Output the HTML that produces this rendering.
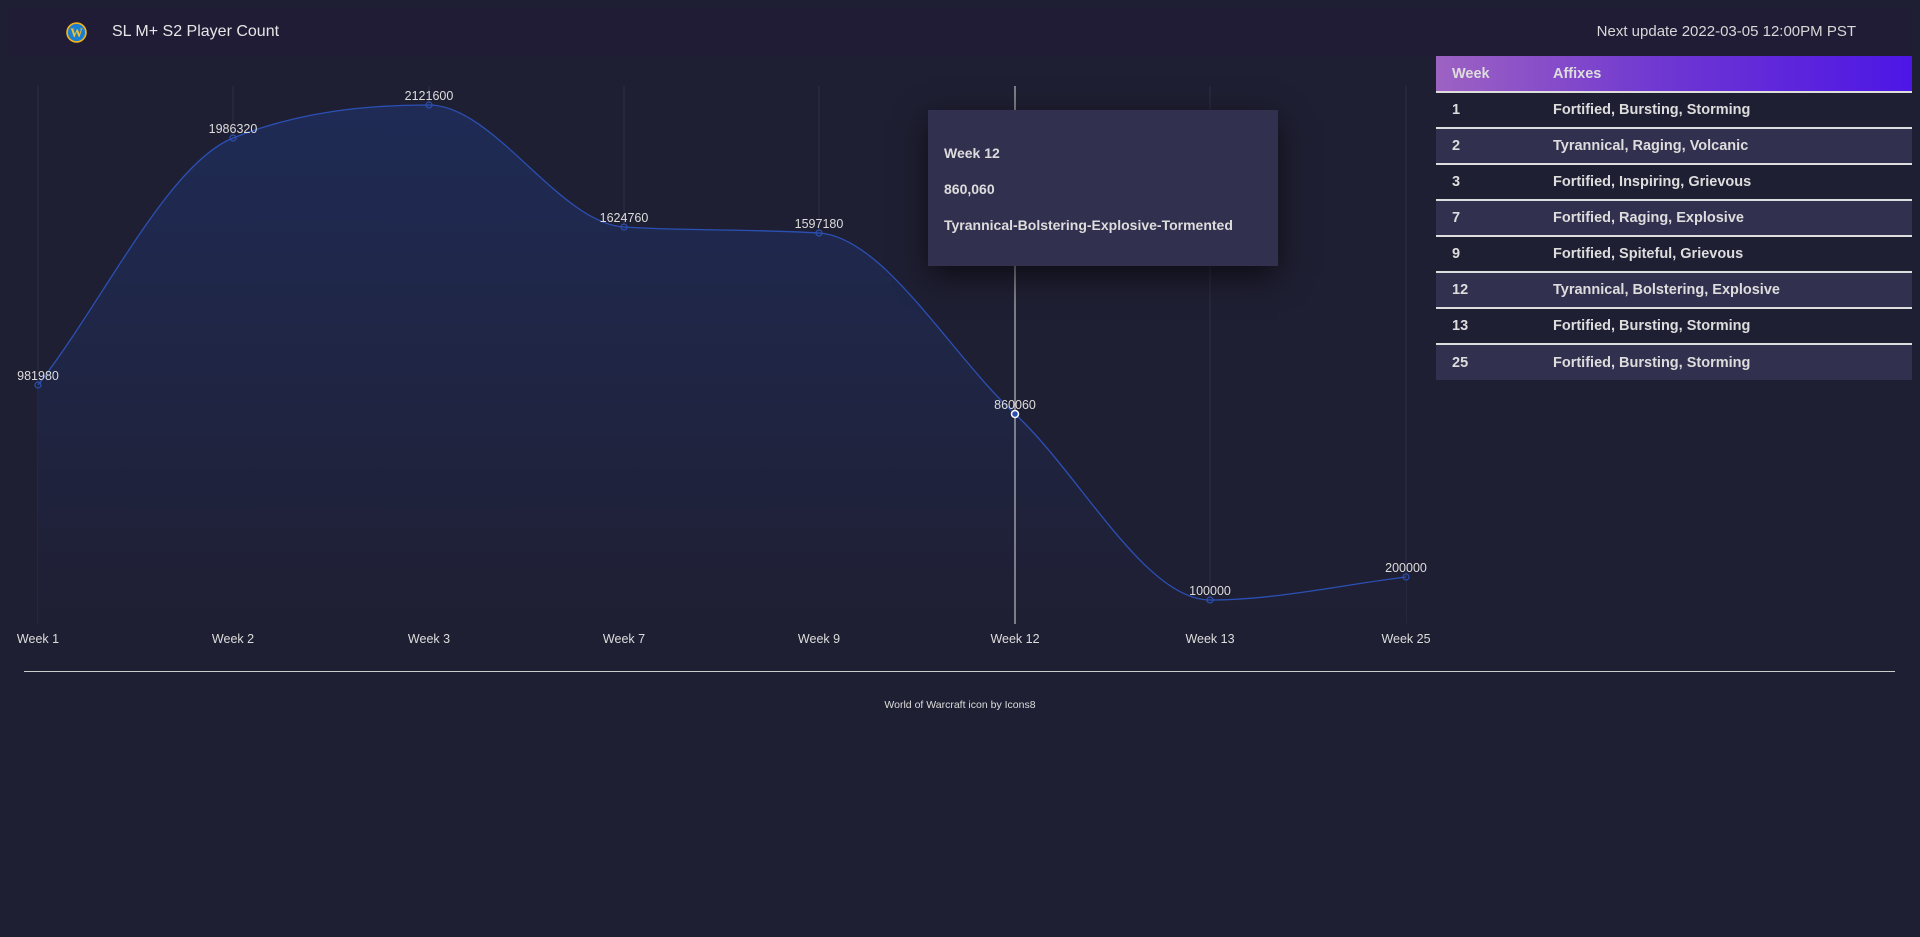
<!DOCTYPE html>
<html><head><meta charset="utf-8"><style>
*{margin:0;padding:0;box-sizing:border-box}
body{width:1920px;height:937px;background:#1f1f33;font-family:"Liberation Sans",sans-serif;color:#ddd;position:relative;overflow:hidden}
.hdr{position:absolute;left:7px;top:8px;width:1905px;height:47px;background:#201c36}
.title{position:absolute;left:112px;top:23px;font-size:16px;color:#e6e6e6}
.upd{position:absolute;right:64px;top:23px;font-size:15px;color:#d8d8d8}
table{position:absolute;left:1436px;top:56px;width:476px;border-collapse:collapse;font-size:14.5px;font-weight:bold;color:#ddd}
th{height:36px;text-align:left;font-weight:bold;color:#ddd;border-bottom:2px solid #ddd}
thead tr{background:linear-gradient(90deg,#9d62c2,#6d35d2 50%,#4d16e6)}
td{height:36px;border-bottom:2px solid #ddd}
tr.e td{background:#32304f}
tbody tr:last-child td{border-bottom:none}
.c1{padding-left:16px;width:117px}
.tip{position:absolute;left:928px;top:110px;width:350px;height:156px;background:#32304f;box-shadow:0 10px 30px rgba(0,0,0,.6);font-size:14px;font-weight:bold;color:#ddd;padding:25px 0 0 16px;line-height:36px}
.rule{position:absolute;left:24px;top:671px;width:1871px;height:1px;background:#ccc}
.foot{position:absolute;top:699px;width:100%;text-align:center;font-size:10.5px;color:#ddd}
</style></head><body>
<div class="hdr"></div>
<svg style="position:absolute;left:66px;top:22px" width="21" height="21" viewBox="0 0 20 20"><circle cx="10" cy="10" r="9" fill="#1a7fd0" stroke="#f2b21c" stroke-width="1.6"/><text x="10" y="14.5" text-anchor="middle" font-size="12" font-weight="bold" fill="#f5c02a" font-family="Liberation Serif">W</text></svg>
<div class="title">SL M+ S2 Player Count</div>
<div class="upd">Next update 2022-03-05 12:00PM PST</div>
<svg style="position:absolute;left:0;top:0" width="1430" height="660">
<defs><linearGradient id="g" x1="0" y1="0" x2="0" y2="1"><stop offset="0" stop-color="#1f2b55"/><stop offset="1" stop-color="#1f1f33"/></linearGradient></defs>
<g stroke="#2e2e46" stroke-width="1">
<line x1="38" y1="86" x2="38" y2="624"/><line x1="233" y1="86" x2="233" y2="624"/><line x1="429" y1="86" x2="429" y2="624"/><line x1="624" y1="86" x2="624" y2="624"/><line x1="819" y1="86" x2="819" y2="624"/><line x1="1210" y1="86" x2="1210" y2="624"/><line x1="1406" y1="86" x2="1406" y2="624"/>
</g>
<path d="M38,385 C103,302 168,164 233,138 C298,112 364,105 429,105 C494,105 559,223 624,227 C689,231 754,229 819,233 C884,237 950,354 1015,414 C1080,474 1145,600 1210,600 C1275,600 1341,585 1406,577 L1406,624 L38,624 Z" fill="url(#g)"/>
<path d="M38,385 C103,302 168,164 233,138 C298,112 364,105 429,105 C494,105 559,223 624,227 C689,231 754,229 819,233 C884,237 950,354 1015,414 C1080,474 1145,600 1210,600 C1275,600 1341,585 1406,577" fill="none" stroke="#2b50b5" stroke-width="1.3"/>
<line x1="1015" y1="86" x2="1015" y2="624" stroke="#bbb" stroke-width="1.2"/>
<g fill="none" stroke="#2b50b5" stroke-width="1.2"><circle cx="38" cy="385" r="3"/><circle cx="233" cy="138" r="3"/><circle cx="429" cy="105" r="3"/><circle cx="624" cy="227" r="3"/><circle cx="819" cy="233" r="3"/><circle cx="1210" cy="600" r="3"/><circle cx="1406" cy="577" r="3"/></g>
<circle cx="1015" cy="414" r="3.5" fill="#2b50b5" stroke="#fff" stroke-width="1.5"/>
<g font-size="12.5" fill="#ddd" text-anchor="middle">
<text x="38" y="380">981980</text><text x="233" y="133">1986320</text><text x="429" y="100">2121600</text><text x="624" y="222">1624760</text><text x="819" y="228">1597180</text><text x="1015" y="409">860060</text><text x="1210" y="595">100000</text><text x="1406" y="572">200000</text>
</g>
<g font-size="12.5" fill="#ddd" text-anchor="middle">
<text x="38" y="643">Week 1</text><text x="233" y="643">Week 2</text><text x="429" y="643">Week 3</text><text x="624" y="643">Week 7</text><text x="819" y="643">Week 9</text><text x="1015" y="643">Week 12</text><text x="1210" y="643">Week 13</text><text x="1406" y="643">Week 25</text>
</g>
</svg>
<div class="tip">Week 12<br>860,060<br>Tyrannical-Bolstering-Explosive-Tormented</div>
<table>
<thead><tr><th class="c1">Week</th><th>Affixes</th></tr></thead>
<tbody>
<tr><td class="c1">1</td><td>Fortified, Bursting, Storming</td></tr>
<tr class="e"><td class="c1">2</td><td>Tyrannical, Raging, Volcanic</td></tr>
<tr><td class="c1">3</td><td>Fortified, Inspiring, Grievous</td></tr>
<tr class="e"><td class="c1">7</td><td>Fortified, Raging, Explosive</td></tr>
<tr><td class="c1">9</td><td>Fortified, Spiteful, Grievous</td></tr>
<tr class="e"><td class="c1">12</td><td>Tyrannical, Bolstering, Explosive</td></tr>
<tr><td class="c1">13</td><td>Fortified, Bursting, Storming</td></tr>
<tr class="e"><td class="c1">25</td><td>Fortified, Bursting, Storming</td></tr>
</tbody></table>
<div class="rule"></div>
<div class="foot">World of Warcraft icon by Icons8</div>
</body></html>
